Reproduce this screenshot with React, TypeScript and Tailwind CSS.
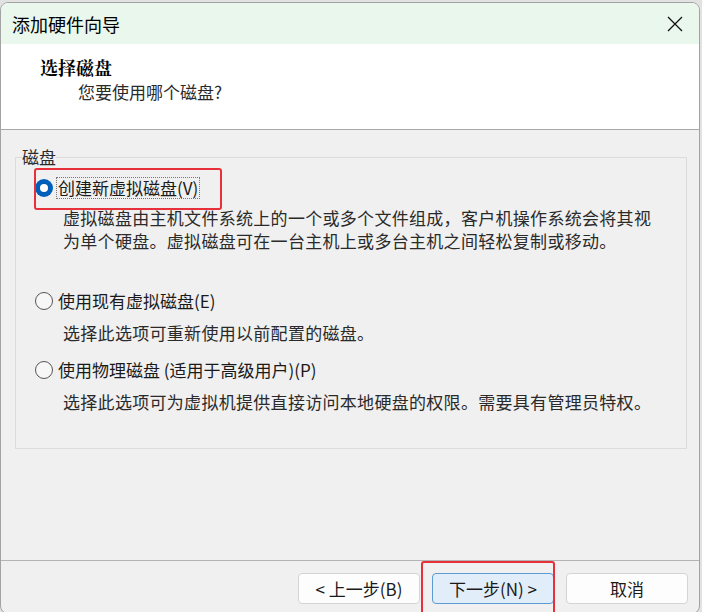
import { ReactNode } from "react";

const SANS = "font-['Noto_Sans_CJK_SC','Noto_Sans',sans-serif]";

function Radio({ checked }: { checked?: boolean }) {
  if (checked) {
    return (
      <span className="flex h-[18px] w-[18px] shrink-0 items-center justify-center rounded-full bg-[#005fb8]">
        <span className="h-[8px] w-[8px] rounded-full bg-white" />
      </span>
    );
  }
  return (
    <span className="h-[18px] w-[18px] shrink-0 rounded-full border-[1.5px] border-[#555] bg-[#f7f7f7]" />
  );
}

function Option({
  label,
  checked,
  focused,
  children,
  rowClass,
  descClass,
}: {
  label: string;
  checked?: boolean;
  focused?: boolean;
  children: ReactNode;
  rowClass: string;
  descClass: string;
}) {
  return (
    <div>
      <div className={`relative flex h-[22px] items-center pl-[19px] ${rowClass}`}>
        <Radio checked={checked} />
        <span
          className={`ml-[3px] px-[1px] text-[17px] leading-[20px] text-[#1a1a1a] ${
            focused ? "border border-dotted border-[#777]" : "border border-transparent"
          }`}
        >
          {label}
        </span>
        {focused && (
          <span className="pointer-events-none absolute left-[18px] top-[-9px] h-[42px] w-[188px] rounded-[3px] border-2 border-[#e8303a]" />
        )}
      </div>
      <p className={`pl-[47px] text-[17px] leading-[23px] tracking-[0.3px] text-[#2a2a2a] ${descClass}`}>
        {children}
      </p>
    </div>
  );
}

function Button({ children, primary }: { children: ReactNode; primary?: boolean }) {
  return (
    <button
      className={`h-[31px] w-[122px] rounded-[4px] border text-[17px] leading-none text-[#1a1a1a] ${
        primary ? "border-[#5c9ad6] bg-[#e1eefa]" : "border-[#d4d4d4] bg-[#fdfdfd]"
      }`}
    >
      {children}
    </button>
  );
}

export default function App() {
  return (
    <div className={`h-[612px] w-[702px] overflow-hidden bg-[#e2e2e2] pt-[2px] ${SANS}`}>
      <div className="flex h-[612px] w-[700px] flex-col overflow-hidden rounded-[8px] border border-[#a3a3a3] bg-[#f0f0f0]">
        {/* title bar */}
        <div className="flex h-[41px] shrink-0 items-center justify-between bg-[#eaf7ed] pl-[11px] pr-[16px]">
          <span className="text-[18px] leading-none text-black">添加硬件向导</span>
          <svg width="16" height="16" viewBox="0 0 16 16" className="mr-[0px]">
            <path d="M1 1 L15 15 M15 1 L1 15" stroke="#111" strokeWidth="1.3" fill="none" />
          </svg>
        </div>

        {/* page heading */}
        <div className="h-[86px] shrink-0 border-b border-[#a8a8a8] bg-white pl-[39px] pt-[11px]">
          <div className="font-['Noto_Serif_CJK_SC','Noto_Sans_CJK_SC',serif] text-[18px] font-bold leading-[24px] text-black">
            选择磁盘
          </div>
          <div className="ml-[38px] mt-[1px] text-[17px] leading-[24px] text-[#2a2a2a]">您要使用哪个磁盘?</div>
        </div>

        {/* options */}
        <div className="flex-1 pl-[14px] pt-[17px]">
          <fieldset className="w-[672px] border border-[#dcdcdc] pb-[35px]">
            <legend className="ml-[6px] text-[17px] leading-[20px] text-[#2a2a2a]">磁盘</legend>
            <Option label="创建新虚拟磁盘(V)" checked focused rowClass="mt-[10px]" descClass="mt-[7px]">
              虚拟磁盘由主机文件系统上的一个或多个文件组成，客户机操作系统会将其视
              <br />
              为单个硬盘。虚拟磁盘可在一台主机上或多台主机之间轻松复制或移动。
            </Option>
            <Option label="使用现有虚拟磁盘(E)" rowClass="mt-[38px]" descClass="mt-[9px]">
              选择此选项可重新使用以前配置的磁盘。
            </Option>
            <Option label="使用物理磁盘 (适用于高级用户)(P)" rowClass="mt-[15px]" descClass="mt-[9px]">
              选择此选项可为虚拟机提供直接访问本地硬盘的权限。需要具有管理员特权。
            </Option>
          </fieldset>
        </div>

        {/* footer buttons */}
        <div className="h-[53px] shrink-0 border-t border-[#b4b4b4]">
          <div className="flex justify-end gap-[12px] pr-[11px] pt-[12px]">
            <Button>&lt; 上一步(B)</Button>
            <div className="relative">
              <Button primary>下一步(N) &gt;</Button>
              <span className="pointer-events-none absolute left-[-11px] top-[-12px] h-[60px] w-[134px] rounded-[3px] border-2 border-[#e8303a]" />
            </div>
            <Button>取消</Button>
          </div>
        </div>
      </div>
    </div>
  );
}
